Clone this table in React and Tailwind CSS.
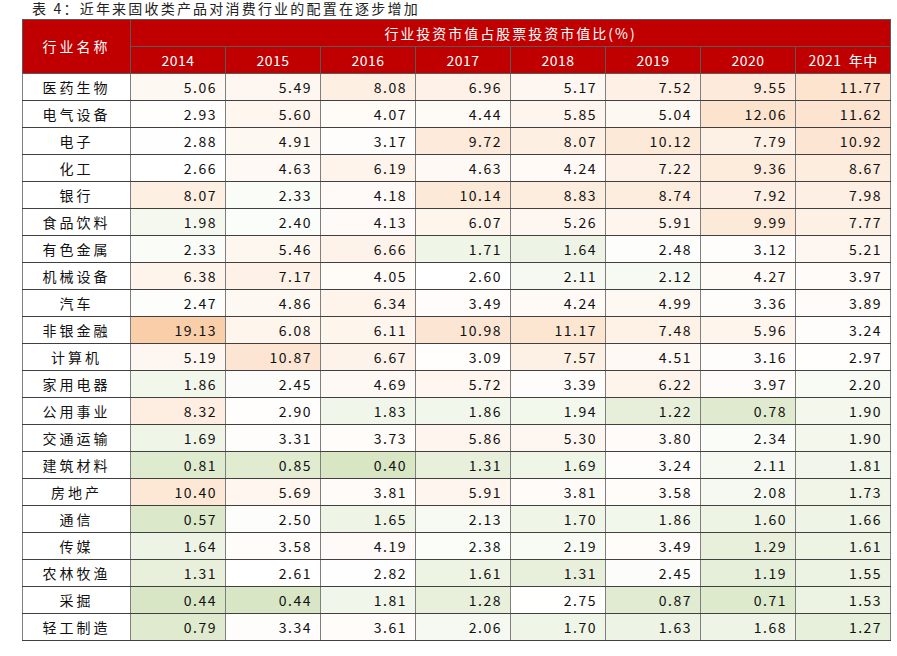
import React from 'react'

const years = ["2014", "2015", "2016", "2017", "2018", "2019", "2020", "2021 年中"]

const rows = [
  ["医药生物", 5.06, 5.49, 8.08, 6.96, 5.17, 7.52, 9.55, 11.77],
  ["电气设备", 2.93, 5.60, 4.07, 4.44, 5.85, 5.04, 12.06, 11.62],
  ["电子", 2.88, 4.91, 3.17, 9.72, 8.07, 10.12, 7.79, 10.92],
  ["化工", 2.66, 4.63, 6.19, 4.63, 4.24, 7.22, 9.36, 8.67],
  ["银行", 8.07, 2.33, 4.18, 10.14, 8.83, 8.74, 7.92, 7.98],
  ["食品饮料", 1.98, 2.40, 4.13, 6.07, 5.26, 5.91, 9.99, 7.77],
  ["有色金属", 2.33, 5.46, 6.66, 1.71, 1.64, 2.48, 3.12, 5.21],
  ["机械设备", 6.38, 7.17, 4.05, 2.60, 2.11, 2.12, 4.27, 3.97],
  ["汽车", 2.47, 4.86, 6.34, 3.49, 4.24, 4.99, 3.36, 3.89],
  ["非银金融", 19.13, 6.08, 6.11, 10.98, 11.17, 7.48, 5.96, 3.24],
  ["计算机", 5.19, 10.87, 6.67, 3.09, 7.57, 4.51, 3.16, 2.97],
  ["家用电器", 1.86, 2.45, 4.69, 5.72, 3.39, 6.22, 3.97, 2.20],
  ["公用事业", 8.32, 2.90, 1.83, 1.86, 1.94, 1.22, 0.78, 1.90],
  ["交通运输", 1.69, 3.31, 3.73, 5.86, 5.30, 3.80, 2.34, 1.90],
  ["建筑材料", 0.81, 0.85, 0.40, 1.31, 1.69, 3.24, 2.11, 1.81],
  ["房地产", 10.40, 5.69, 3.81, 5.91, 3.81, 3.58, 2.08, 1.73],
  ["通信", 0.57, 2.50, 1.65, 2.13, 1.70, 1.86, 1.60, 1.66],
  ["传媒", 1.64, 3.58, 4.19, 2.38, 2.19, 3.49, 1.29, 1.61],
  ["农林牧渔", 1.31, 2.61, 2.82, 1.61, 1.31, 2.45, 1.19, 1.55],
  ["采掘", 0.44, 0.44, 1.81, 1.28, 2.75, 0.87, 0.71, 1.53],
  ["轻工制造", 0.79, 3.34, 3.61, 2.06, 1.70, 1.63, 1.68, 1.27],
]

// 3-colour scale: green (min) -> white (mid) -> peach (max)
const MIN = 0.4, MID = 2.6, MAX = 19.13
const green = [216, 230, 196]
const peach = [250, 206, 168]

const mix = (a, t) => a.map((c) => Math.round(255 + (c - 255) * t))

const cellColor = (v) => {
  const [r, g, b] = v < MID
    ? mix(green, (MID - v) / (MID - MIN))
    : mix(peach, (v - MID) / (MAX - MID))
  return `rgb(${r}, ${g}, ${b})`
}

const font = { fontFamily: '"Noto Sans CJK SC", "Liberation Sans", sans-serif' }

export default function App() {
  return (
    <div className="w-[897px] h-[656px] bg-white overflow-hidden text-[#111]" style={font}>
      {/* Title */}
      <div className="h-[16px] mb-[3px] pl-[32px] text-[14px] leading-[16px] tracking-[2.2px] text-[#222]">
        表 4：近年来固收类产品对消费行业的配置在逐步增加
      </div>

      <table className="ml-[22px] border-collapse table-fixed w-[869px] text-[14px]">
        <colgroup>
          <col className="w-[108px]" />
          {years.map((y) => <col key={y} className="w-[95px]" />)}
        </colgroup>
        <thead>
          <tr className="h-[27px] bg-[#c00000] text-white">
            <th rowSpan={2} className="border border-[#595959] font-normal tracking-[3px]">
              行业名称
            </th>
            <th colSpan={8} className="border border-[#595959] font-normal tracking-[2px]">
              行业投资市值占股票投资市值比(%)
            </th>
          </tr>
          <tr className="h-[27px] bg-[#c00000] text-white">
            {years.map((y) => (
              <th key={y} className="border border-[#595959] font-normal tracking-[0.5px] whitespace-pre">
                {y.replace(" ", "  ")}
              </th>
            ))}
          </tr>
        </thead>
        <tbody>
          {rows.map(([name, ...vals]) => (
            <tr key={name} className="h-[27px]">
              <td className="border border-[#7f7f7f] border-b-[#404040] text-center tracking-[3px] p-0">
                {name}
              </td>
              {vals.map((v, i) => (
                <td
                  key={i}
                  className="border border-[#7f7f7f] border-b-[#404040] text-right pr-[8px] p-0 tracking-[1.5px]"
                  style={{ backgroundColor: cellColor(v) }}
                >
                  {v.toFixed(2)}
                </td>
              ))}
            </tr>
          ))}
        </tbody>
      </table>
    </div>
  )
}
